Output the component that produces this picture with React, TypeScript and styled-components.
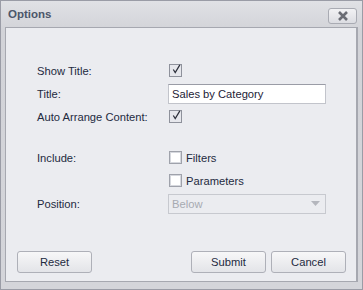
import { createGlobalStyle, styled } from 'styled-components';

const GlobalStyle = createGlobalStyle`
  html, body {
    margin: 0;
    padding: 0;
    background: #ffffff;
  }
`;

const font = `"Liberation Sans", Arial, sans-serif`;

const CheckMark = () => (
  <svg width="13" height="13" viewBox="0 0 13 13">
    <path d="M3 6.5 L5.5 10.5 L11.5 0.5" fill="none" stroke="#2c2f3a" strokeWidth="1.6" />
  </svg>
);

const Checkbox = ({ checked, label }: { checked?: boolean; label?: string }) => (
  <CheckRow>
    <Box $checked={checked}>{checked && <CheckMark />}</Box>
    {label && <CheckLabel>{label}</CheckLabel>}
  </CheckRow>
);

const App = () => (
  <>
    <GlobalStyle />
    <Window>
      <TitleBar>
        <Title>Options</Title>
        <CloseButton aria-label="Close">
          <svg width="12" height="10" viewBox="0 0 12 10">
            <path d="M2 1 L10 9 M10 1 L2 9" stroke="#6a6c74" strokeWidth="2.6" />
          </svg>
        </CloseButton>
      </TitleBar>
      <Panel>
        <Form>
          <Label>Show Title:</Label>
          <Checkbox checked />
          <Label>Title:</Label>
          <TextInput defaultValue="Sales by Category" />
          <Label>Auto Arrange Content:</Label>
          <Checkbox checked />
          <Spacer />
          <Label>Include:</Label>
          <Checkbox label="Filters" />
          <span />
          <Checkbox label="Parameters" />
          <Label>Position:</Label>
          <Select>
            <span>Below</span>
            <svg width="9" height="5" viewBox="0 0 9 5">
              <path d="M0 0 H9 L4.5 5 Z" fill="#b4b6bd" />
            </svg>
          </Select>
        </Form>
        <Footer>
          <Button>Reset</Button>
          <ButtonGroup>
            <Button>Submit</Button>
            <Button>Cancel</Button>
          </ButtonGroup>
        </Footer>
      </Panel>
    </Window>
  </>
);

export default App;

const Window = styled.div`
  box-sizing: border-box;
  width: 363px;
  height: 290px;
  display: flex;
  flex-direction: column;
  padding: 0 4px 7px;
  background: linear-gradient(#e0e1e5, #d2d3d8 30px, #d4d5da);
  border: 1px solid #9a9ca6;
  font-family: ${font};
`;

const TitleBar = styled.div`
  height: 26px;
  display: flex;
  align-items: center;
  justify-content: space-between;
  padding: 0 1px 0 3px;
`;

const Title = styled.span`
  font-size: 11.5px;
  font-weight: 700;
  color: #4b566a;
`;

const CloseButton = styled.button`
  box-sizing: border-box;
  width: 29px;
  height: 16px;
  margin-top: 3px;
  display: flex;
  align-items: center;
  justify-content: center;
  padding: 0;
  background: linear-gradient(#f2f2f4, #dcdde2);
  border: 1px solid #a9abb3;
  border-radius: 3px;
`;

const Panel = styled.div`
  flex: 1;
  display: flex;
  flex-direction: column;
  justify-content: space-between;
  background: #ebecf0;
  border: 1px solid #a6a8b0;
  border-right-width: 2px;
  padding: 31px 10px 8px 11px;
`;

const Form = styled.div`
  display: grid;
  grid-template-columns: 131px 158px;
  grid-template-rows: 23px 23px 23px 18px 23px 23px 23px;
  align-items: center;
  padding-left: 20px;
`;

const Spacer = styled.div`
  grid-column: 1 / -1;
`;

const Label = styled.span`
  font-size: 11.2px;
  color: #232a40;
`;

const CheckRow = styled.div`
  display: flex;
  align-items: center;
  gap: 4px;
  padding-left: 1px;
`;

const Box = styled.div<{ $checked?: boolean }>`
  box-sizing: border-box;
  width: 13px;
  height: 13px;
  display: flex;
  align-items: center;
  justify-content: center;
  background: ${({ $checked }) => ($checked ? '#e6e7ec' : '#ffffff')};
  border: 1px solid ${({ $checked }) => ($checked ? '#8e919b' : '#9fa2ab')};
  box-shadow: ${({ $checked }) => ($checked ? 'none' : 'inset 0 0 0 1px #d6d8de')};

  svg {
    margin-top: -3px;
    margin-left: 1px;
  }
`;

const CheckLabel = styled.span`
  font-size: 11.2px;
  color: #232a40;
`;

const TextInput = styled.input`
  box-sizing: border-box;
  width: 158px;
  height: 20px;
  padding: 0 3px;
  background: #ffffff;
  border: 1px solid #c2c4cb;
  border-top-color: #9a9ca6;
  font-family: ${font};
  font-size: 11.2px;
  color: #1d2236;
  outline: none;
`;

const Select = styled.div`
  box-sizing: border-box;
  width: 158px;
  height: 20px;
  display: flex;
  align-items: center;
  justify-content: space-between;
  padding: 0 5px 0 3px;
  border: 1px solid #c7c9cf;
  font-size: 11.2px;
  color: #a7aab2;
`;

const Footer = styled.div`
  display: flex;
  justify-content: space-between;
`;

const ButtonGroup = styled.div`
  display: flex;
  gap: 5px;
`;

const Button = styled.button`
  box-sizing: border-box;
  width: 75px;
  height: 22px;
  padding: 0;
  background: linear-gradient(#f7f7f8, #e3e4e8);
  border: 1px solid #aeb0b8;
  border-radius: 3px;
  font-family: ${font};
  font-size: 11.2px;
  color: #232a40;
`;
